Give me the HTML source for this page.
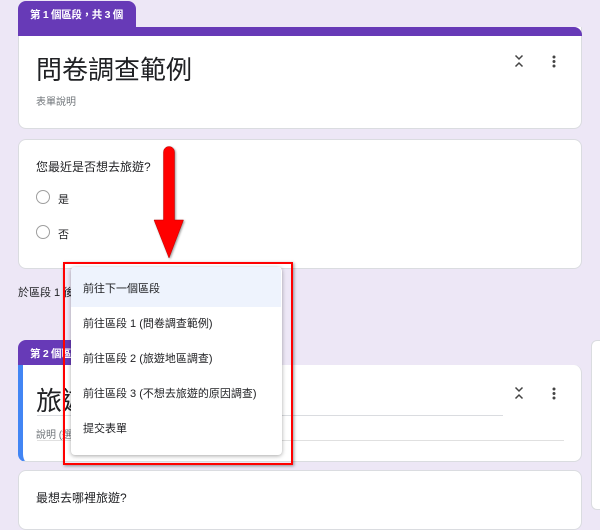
<!DOCTYPE html>
<html><head><meta charset="utf-8">
<style>
*{margin:0;padding:0;box-sizing:border-box}
body{width:600px;height:500px;overflow:hidden;background:#ede7f6;font-family:"Liberation Sans","Noto Sans CJK TC",sans-serif;color:#202124;position:relative}
.abs{position:absolute}
.card{position:absolute;background:#fff;border-radius:8px;border:1px solid #dadce0;left:18px;width:564px}
.tab{position:absolute;background:#673ab7;color:#fff;font-size:10.5px;font-weight:bold;border-radius:8px 8px 0 0;padding:0 0 0 12px;line-height:28px;white-space:nowrap;overflow:hidden;letter-spacing:-.3px}
.bar{position:absolute;left:18px;width:564px;height:9px;background:#673ab7;border-radius:0 8px 0 0}
.radio{position:absolute;width:14px;height:14px;border:1.5px solid #9e9e9e;border-radius:50%}
.t12{font-size:12px}
.item{position:absolute;left:0;width:210px;height:35px;line-height:35px;padding-left:12px;font-size:11px;color:#202124}
</style></head><body>
<div class="tab" style="left:18px;top:1px;width:118px;height:30px">第 1 個區段，共 3 個</div>
<div class="card" style="top:27px;height:102px;border-top:none;border-radius:0 0 8px 8px"></div>
<div class="bar" style="top:27px"></div>
<div class="abs" style="left:36px;top:50px;font-size:26px">問卷調查範例</div>
<div class="abs" style="left:36px;top:93px;font-size:10px;color:#70757a">表單說明</div>
<svg class="abs" style="left:514px;top:54px" width="10" height="14" viewBox="0 0 10 14"><path d="M1.5 1.5l3.5 3.5 3.5-3.5M1.5 12.5l3.5-3.5 3.5 3.5" stroke="#444" stroke-width="1.5" fill="none"/></svg>
<svg class="abs" style="left:551px;top:55px" width="6" height="14"><circle cx="3" cy="2" r="1.5" fill="#444"/><circle cx="3" cy="6.5" r="1.5" fill="#444"/><circle cx="3" cy="11" r="1.5" fill="#444"/></svg>

<div class="card" style="top:139px;height:130px"></div>
<div class="abs t12" style="left:36px;top:158px">您最近是否想去旅遊?</div>
<div class="radio" style="left:36px;top:190px"></div><div class="abs" style="left:58px;top:191px;font-size:11px">是</div>
<div class="radio" style="left:36px;top:225px"></div><div class="abs" style="left:58px;top:226px;font-size:11px">否</div>

<div class="abs" style="left:18px;top:284px;font-size:11px">於區段 1 後</div>

<div class="tab" style="left:18px;top:340px;width:118px;height:30px">第 2 個區段，共 3 個</div>
<div class="card" style="top:365px;height:97px;border-top:none;border-radius:0 8px 8px 8px;border-left:5px solid #4285f4"></div>
<div class="abs" style="left:36px;top:381px;font-size:26px">旅遊地區調查</div>
<div class="abs" style="left:37px;top:415px;width:466px;height:1px;background:#dadce0"></div>
<div class="abs" style="left:36px;top:426px;font-size:10px;color:#70757a">說明 (選填)</div>
<div class="abs" style="left:37px;top:440px;width:527px;height:1px;background:#e0e0e0"></div>
<svg class="abs" style="left:514px;top:386px" width="10" height="14" viewBox="0 0 10 14"><path d="M1.5 1.5l3.5 3.5 3.5-3.5M1.5 12.5l3.5-3.5 3.5 3.5" stroke="#444" stroke-width="1.5" fill="none"/></svg>
<svg class="abs" style="left:551px;top:387px" width="6" height="14"><circle cx="3" cy="2" r="1.5" fill="#444"/><circle cx="3" cy="6.5" r="1.5" fill="#444"/><circle cx="3" cy="11" r="1.5" fill="#444"/></svg>

<div class="card" style="top:470px;height:60px"></div>
<div class="abs t12" style="left:36px;top:489px">最想去哪裡旅遊?</div>
<div class="abs" style="left:591px;top:340px;width:20px;height:170px;background:#fff;border:1px solid #dadce0;border-radius:6px"></div>

<div class="abs" style="left:63px;top:262px;width:230px;height:203px;border:2px solid #f00;box-shadow:1px 1px 3px rgba(0,0,0,.4)"></div>
<div class="abs" style="left:71px;top:267px;width:211px;height:188px;background:#fff;border-radius:4px;box-shadow:0 1px 4px rgba(0,0,0,.35)">
<div class="item" style="top:0;height:40px;line-height:44px;background:#eef3fd;border-radius:4px 4px 0 0">前往下一個區段</div>
<div class="item" style="top:40px">前往區段 1 (問卷調查範例)</div>
<div class="item" style="top:75px">前往區段 2 (旅遊地區調查)</div>
<div class="item" style="top:110px">前往區段 3 (不想去旅遊的原因調查)</div>
<div class="item" style="top:145px">提交表單</div>
</div>

<svg class="abs" style="left:150px;top:144px" width="40" height="118" viewBox="0 0 40 118"><path d="M13.5 8a5.5 5.5 0 0 1 11 0V76h9L19 114 4 76h9.5z" fill="#f00" stroke="#b00" stroke-width=".5" style="filter:drop-shadow(1px 1px 1px rgba(0,0,0,.4))"/></svg>
</body></html>
